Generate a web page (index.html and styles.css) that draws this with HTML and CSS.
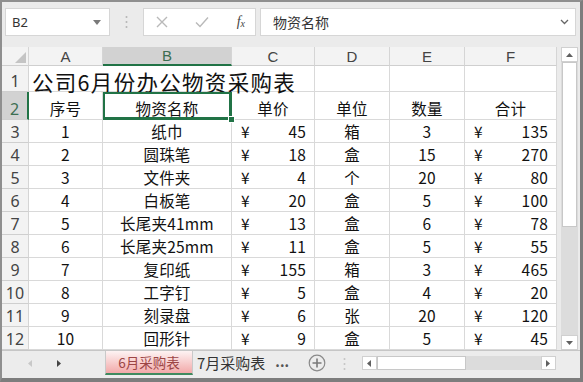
FILE: index.html
```html
<!DOCTYPE html>
<html lang="zh-CN">
<head>
  <meta charset="UTF-8">
  <title>6月采购表</title>
  <link rel="stylesheet" href="styles.css">
</head>
<body>
  <div class="app">

    <!-- 名称框 + 编辑栏 -->
    <div class="formula-bar">
      <div class="name-box">
        <span>B2</span>
        <svg class="caret" width="8" height="5" viewBox="0 0 8 5"><path d="M0 0h8L4 5z" fill="#7a7a7a"/></svg>
      </div>
      <svg class="grip" width="3" height="14" viewBox="0 0 3 14"><circle cx="1.5" cy="2" r="1" fill="#b5b5b5"/><circle cx="1.5" cy="7" r="1" fill="#b5b5b5"/><circle cx="1.5" cy="12" r="1" fill="#b5b5b5"/></svg>
      <div class="fx-buttons">
        <svg width="12" height="12" viewBox="0 0 12 12"><path d="M1 1l10 10M11 1L1 11" stroke="#b9b9b9" stroke-width="1.4"/></svg>
        <svg width="14" height="12" viewBox="0 0 14 12"><path d="M1 6.5l4 4L13 1.5" stroke="#b9b9b9" stroke-width="1.4" fill="none"/></svg>
        <span class="fx">f<sub>x</sub></span>
      </div>
      <div class="formula-input">
        <span>物资名称</span>
        <svg width="9" height="6" viewBox="0 0 9 6"><path d="M1 1l3.5 3.5L8 1" stroke="#666" stroke-width="1.3" fill="none"/></svg>
      </div>
    </div>

    <!-- 工作表 -->
    <div class="sheet-area">
      <div class="grid">
        <div class="corner"><svg width="11" height="11" viewBox="0 0 11 11"><path d="M11 0v11H0z" fill="#c4c4c4"/></svg></div>
        <div class="col-head">A</div>
        <div class="col-head active">B</div>
        <div class="col-head">C</div>
        <div class="col-head">D</div>
        <div class="col-head">E</div>
        <div class="col-head">F</div>

        <div class="row-head">1</div>
        <div class="cell title">公司6月份办公物资采购表</div>
        <div class="cell"></div>
        <div class="cell"></div>
        <div class="cell"></div>

        <div class="row-head active">2</div>
        <div class="cell head">序号</div>
        <div class="cell head selected">物资名称</div>
        <div class="cell head">单价</div>
        <div class="cell head">单位</div>
        <div class="cell head">数量</div>
        <div class="cell head">合计</div>

        <div class="row-head">3</div>
        <div class="cell">1</div>
        <div class="cell">纸巾</div>
        <div class="cell money"><span>¥</span><span>45</span></div>
        <div class="cell">箱</div>
        <div class="cell">3</div>
        <div class="cell money"><span>¥</span><span>135</span></div>

        <div class="row-head">4</div>
        <div class="cell">2</div>
        <div class="cell">圆珠笔</div>
        <div class="cell money"><span>¥</span><span>18</span></div>
        <div class="cell">盒</div>
        <div class="cell">15</div>
        <div class="cell money"><span>¥</span><span>270</span></div>

        <div class="row-head">5</div>
        <div class="cell">3</div>
        <div class="cell">文件夹</div>
        <div class="cell money"><span>¥</span><span>4</span></div>
        <div class="cell">个</div>
        <div class="cell">20</div>
        <div class="cell money"><span>¥</span><span>80</span></div>

        <div class="row-head">6</div>
        <div class="cell">4</div>
        <div class="cell">白板笔</div>
        <div class="cell money"><span>¥</span><span>20</span></div>
        <div class="cell">盒</div>
        <div class="cell">5</div>
        <div class="cell money"><span>¥</span><span>100</span></div>

        <div class="row-head">7</div>
        <div class="cell">5</div>
        <div class="cell">长尾夹41mm</div>
        <div class="cell money"><span>¥</span><span>13</span></div>
        <div class="cell">盒</div>
        <div class="cell">6</div>
        <div class="cell money"><span>¥</span><span>78</span></div>

        <div class="row-head">8</div>
        <div class="cell">6</div>
        <div class="cell">长尾夹25mm</div>
        <div class="cell money"><span>¥</span><span>11</span></div>
        <div class="cell">盒</div>
        <div class="cell">5</div>
        <div class="cell money"><span>¥</span><span>55</span></div>

        <div class="row-head">9</div>
        <div class="cell">7</div>
        <div class="cell">复印纸</div>
        <div class="cell money"><span>¥</span><span>155</span></div>
        <div class="cell">箱</div>
        <div class="cell">3</div>
        <div class="cell money"><span>¥</span><span>465</span></div>

        <div class="row-head">10</div>
        <div class="cell">8</div>
        <div class="cell">工字钉</div>
        <div class="cell money"><span>¥</span><span>5</span></div>
        <div class="cell">盒</div>
        <div class="cell">4</div>
        <div class="cell money"><span>¥</span><span>20</span></div>

        <div class="row-head">11</div>
        <div class="cell">9</div>
        <div class="cell">刻录盘</div>
        <div class="cell money"><span>¥</span><span>6</span></div>
        <div class="cell">张</div>
        <div class="cell">20</div>
        <div class="cell money"><span>¥</span><span>120</span></div>

        <div class="row-head">12</div>
        <div class="cell">10</div>
        <div class="cell">回形针</div>
        <div class="cell money"><span>¥</span><span>9</span></div>
        <div class="cell">盒</div>
        <div class="cell">5</div>
        <div class="cell money"><span>¥</span><span>45</span></div>
      </div>

      <!-- 竖向滚动条 -->
      <div class="vscroll">
        <div class="sb-btn"><svg width="7" height="4" viewBox="0 0 7 4"><path d="M0 4h7L3.5 0z" fill="#606060"/></svg></div>
        <div class="v-thumb"></div>
        <div class="v-track"></div>
        <div class="sb-btn"><svg width="7" height="4" viewBox="0 0 7 4"><path d="M0 0h7L3.5 4z" fill="#606060"/></svg></div>
      </div>
    </div>

    <!-- 工作表标签 -->
    <div class="tab-bar">
      <div class="tab-nav">
        <svg width="4" height="7" viewBox="0 0 4 7"><path d="M4 0v7L0 3.5z" fill="#c8c8c8"/></svg>
        <svg width="4" height="7" viewBox="0 0 4 7"><path d="M0 0v7l4-3.5z" fill="#444"/></svg>
      </div>
      <div class="tab active">6月采购表</div>
      <div class="tab">7月采购表</div>
      <div class="more">...</div>
      <svg class="add" width="18" height="18" viewBox="0 0 18 18"><circle cx="9" cy="9" r="7.8" stroke="#8a8a8a" stroke-width="1.2" fill="none"/><path d="M9 4.5v9M4.5 9h9" stroke="#7a7a7a" stroke-width="1.6"/></svg>
      <svg class="grip" width="3" height="14" viewBox="0 0 3 14"><circle cx="1.5" cy="2" r="1" fill="#c4c4c4"/><circle cx="1.5" cy="7" r="1" fill="#c4c4c4"/><circle cx="1.5" cy="12" r="1" fill="#c4c4c4"/></svg>
      <div class="hscroll">
        <div class="sb-btn"><svg width="4" height="7" viewBox="0 0 4 7"><path d="M4 0v7L0 3.5z" fill="#606060"/></svg></div>
        <div class="h-thumb"></div>
        <div class="h-track"></div>
        <div class="sb-btn"><svg width="4" height="7" viewBox="0 0 4 7"><path d="M0 0v7l4-3.5z" fill="#606060"/></svg></div>
      </div>
    </div>

  </div>
</body>
</html>
```

FILE: styles.css
```css
html, body {
  margin: 0;
  padding: 0;
}
body {
  font-family: "Noto Sans CJK SC", "Noto Sans", sans-serif;
  color: #111;
  background: #fff;
}
.app {
  width: 583px;
  height: 382px;
  box-sizing: border-box;
  border-top: 2px solid #8f8f8f;
  border-left: 2px solid #8f8f8f;
  border-right: 3px solid #7d7d7d;
  border-bottom: 4px solid #7d7d7d;
  background: #ebebeb;
  display: flex;
  flex-direction: column;
  overflow: hidden;
}

/* 编辑栏 */
.formula-bar {
  height: 45px;
  display: flex;
  align-items: flex-start;
  padding: 6px 0 0 3px;
  box-sizing: border-box;
}
.name-box {
  width: 105px;
  height: 28px;
  box-sizing: border-box;
  background: #fff;
  border: 1px solid #d6d6d6;
  display: flex;
  align-items: center;
  justify-content: space-between;
  padding: 0 8px 0 6px;
  font-family: "Noto Sans", sans-serif;
  font-size: 13px;
  color: #333;
}
.formula-bar .grip {
  margin: 7px 15px 0 15px;
}
.fx-buttons {
  width: 113px;
  height: 28px;
  box-sizing: border-box;
  background: #fff;
  border: 1px solid #d6d6d6;
  display: flex;
  align-items: center;
  justify-content: space-between;
  padding: 0 10px 0 12px;
}
.fx {
  font-family: "Liberation Serif", serif;
  font-style: italic;
  font-size: 14px;
  color: #444;
}
.fx sub {
  font-size: 10px;
  vertical-align: -1px;
}
.formula-input {
  width: 316px;
  height: 28px;
  margin-left: 4px;
  box-sizing: border-box;
  background: #fff;
  border: 1px solid #d6d6d6;
  display: flex;
  align-items: center;
  justify-content: space-between;
  padding: 0 6px 0 12px;
  font-size: 14px;
  color: #333;
}

/* 工作表 */
.sheet-area {
  display: flex;
  height: 303px;
}
.grid {
  display: grid;
  grid-template-columns: 27px 74px 129px 83px 75px 75px 92px;
  grid-template-rows: 19px 26px 28px repeat(10, 23px);
  background: #fff;
  width: 555px;
}
.corner, .col-head, .row-head {
  background: #f3f3f3;
  border-right: 1px solid #d5d5d5;
  border-bottom: 1px solid #cfcfcf;
  box-sizing: border-box;
  color: #444;
}
.corner {
  display: flex;
  align-items: flex-end;
  justify-content: flex-end;
  padding: 0 2px 2px 0;
}
.col-head {
  display: flex;
  align-items: center;
  justify-content: center;
  font-family: "Liberation Sans", sans-serif;
  font-size: 15px;
}
.col-head.active {
  background: #d2d2d2;
  color: #3c6e51;
  border-bottom: 2px solid #217346;
}
.row-head {
  display: flex;
  align-items: flex-end;
  justify-content: center;
  font-family: "Noto Sans", sans-serif;
  font-size: 16px;
  line-height: 20px;
}
.row-head.active {
  background: #d2d2d2;
  color: #3c6e51;
  border-right: 2px solid #217346;
}
.cell {
  border-right: 1px solid #d9d9d9;
  border-bottom: 1px solid #d9d9d9;
  box-sizing: border-box;
  display: flex;
  align-items: center;
  justify-content: center;
  font-size: 15.5px;
  line-height: normal;
  white-space: nowrap;
  letter-spacing: 0.2px;
}
.cell.title {
  grid-column: span 3;
  align-items: flex-start;
  justify-content: flex-start;
  font-size: 21.5px;
  letter-spacing: 1.3px;
  padding: 0 0 0 3px;
}
.cell.head {
  align-items: flex-start;
  padding-top: 5px;
}
.cell.money {
  justify-content: space-between;
  padding: 0 8px 0 9px;
}
.cell.selected {
  position: relative;
  box-shadow: inset 0 0 0 2px #217346;
  border-right-color: #217346;
  border-bottom-color: #217346;
}
.cell.selected::after {
  content: "";
  position: absolute;
  right: -4px;
  bottom: -4px;
  width: 5px;
  height: 5px;
  background: #217346;
  border: 1px solid #fff;
  z-index: 2;
}

/* 滚动条 */
.vscroll {
  width: 17px;
  margin-left: 4px;
  display: flex;
  flex-direction: column;
  background: #dcdcdc;
}
.sb-btn {
  height: 15px;
  display: flex;
  align-items: center;
  justify-content: center;
  background: #fff;
  border: 1px solid #d0d0d0;
  box-sizing: border-box;
}
.v-thumb {
  height: 165px;
  background: #fff;
  border: 1px solid #c8c8c8;
  box-sizing: border-box;
  margin: 0 1px;
}
.v-track {
  flex: 1;
}

/* 标签栏 */
.tab-bar {
  flex: 1;
  display: flex;
  align-items: flex-start;
  border-top: 1px solid #c6c6c6;
  background: #ececec;
}
.tab-nav {
  width: 103px;
  height: 25px;
  display: flex;
  align-items: center;
  gap: 25px;
  padding-left: 26px;
  box-sizing: border-box;
}
.tab {
  height: 24px;
  line-height: 23px;
  padding: 0 4px;
  font-size: 15px;
  color: #333;
}
.tab.active {
  width: 88px;
  box-sizing: border-box;
  text-align: center;
  font-size: 13.5px;
  color: #9c4545;
  background: linear-gradient(#fdf3f3, #f2a9a9);
  border-bottom: 2px solid #3f8a5f;
  border-left: 1px solid #c9c9c9;
  border-right: 1px solid #c9c9c9;
}
.more {
  height: 24px;
  line-height: 20px;
  margin-left: 6px;
  font-size: 14px;
  font-weight: bold;
  color: #555;
}
.add {
  margin: 3px 0 0 19px;
}
.tab-bar .grip {
  margin: 6px 16px 0 17px;
}
.hscroll {
  width: 194px;
  height: 14px;
  margin-top: 5px;
  display: flex;
  background: #dcdcdc;
}
.hscroll .sb-btn {
  width: 15px;
  height: 14px;
}
.h-thumb {
  width: 89px;
  background: #fff;
  border: 1px solid #c8c8c8;
  box-sizing: border-box;
}
.h-track {
  flex: 1;
}
```
